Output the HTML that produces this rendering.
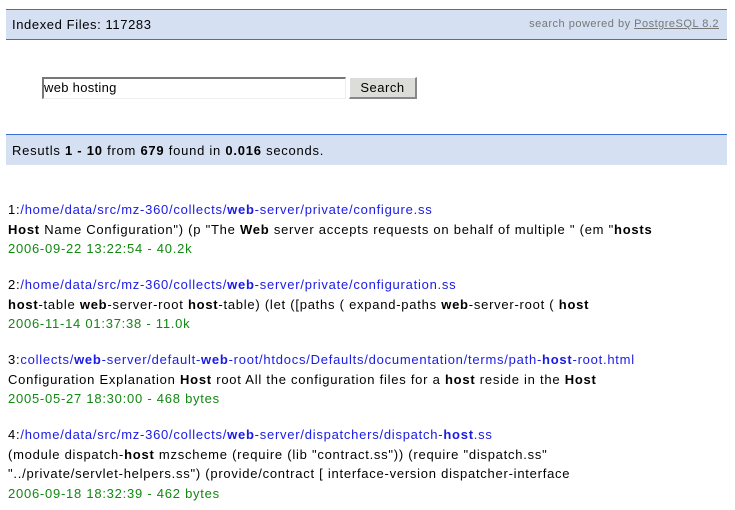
<!DOCTYPE html>
<html><head><meta charset="utf-8"><style>
*{margin:0;padding:0;box-sizing:border-box}
body{width:735px;height:510px;background:#fff;font-family:"Liberation Sans",sans-serif;font-size:13px;color:#000;position:relative;overflow:hidden;letter-spacing:0.75px}
.bar{position:absolute;left:6px;width:721px;background:#d5e0f2;border-top:1px solid #3a6fd8}
#top{top:9px;height:31px;border-bottom:1px solid #3a6fd8}
#top .l{position:absolute;left:6px;top:7px;font-size:13px;letter-spacing:0.6px}
#top .r{position:absolute;right:8px;top:8px;font-size:11px;color:#777;letter-spacing:0.5px}
#top .r u{color:#777}
#res{top:134px;height:31px}
#res span{position:absolute;left:6px;top:8px}
#inp{position:absolute;left:42px;top:77px;width:304px;height:22px;border:1px solid #888;border-right-color:#eee;border-bottom-color:#eee;border-top:2px solid #777;border-left:2px solid #777;padding-left:0;font-size:13px;line-height:18px;letter-spacing:0.3px}
#btn{position:absolute;left:349px;top:77px;width:68px;height:22px;background:#dcdcd8;border:1px solid #fff;border-right:2px solid #888;border-bottom:2px solid #888;text-align:center;line-height:19px;font-size:13px;letter-spacing:0.5px}
.blk{position:absolute;left:8px;line-height:19.5px;white-space:nowrap}
.blk a{color:#1a1ae6;text-decoration:none}
.g{color:#118811}
</style></head><body>
<div class="bar" id="top"><span class="l">Indexed Files: 117283</span><span class="r">search powered by <u>PostgreSQL 8.2</u></span></div>
<div id="inp">web hosting</div>
<div id="btn">Search</div>
<div class="bar" id="res"><span>Resutls <b>1 - 10</b> from <b>679</b> found in <b>0.016</b> seconds.</span></div>
<div class="blk" style="top:200px">1:<a>/home/data/src/mz-360/collects/<b>web</b>-server/private/configure.ss</a><br><b>Host</b> Name Configuration") (p "The <b>Web</b> server accepts requests on behalf of multiple " (em "<b>hosts</b><br><span class="g">2006-09-22 13:22:54 - 40.2k</span></div>
<div class="blk" style="top:275px">2:<a>/home/data/src/mz-360/collects/<b>web</b>-server/private/configuration.ss</a><br><b>host</b>-table <b>web</b>-server-root <b>host</b>-table) (let ([paths ( expand-paths <b>web</b>-server-root ( <b>host</b><br><span class="g">2006-11-14 01:37:38 - 11.0k</span></div>
<div class="blk" style="top:350px">3:<a>collects/<b>web</b>-server/default-<b>web</b>-root/htdocs/Defaults/documentation/terms/path-<b>host</b>-root.html</a><br>Configuration Explanation <b>Host</b> root All the configuration files for a <b>host</b> reside in the <b>Host</b><br><span class="g">2005-05-27 18:30:00 - 468 bytes</span></div>
<div class="blk" style="top:425px">4:<a>/home/data/src/mz-360/collects/<b>web</b>-server/dispatchers/dispatch-<b>host</b>.ss</a><br>(module dispatch-<b>host</b> mzscheme (require (lib "contract.ss")) (require "dispatch.ss"<br>"../private/servlet-helpers.ss") (provide/contract [ interface-version dispatcher-interface<br><span class="g">2006-09-18 18:32:39 - 462 bytes</span></div>
</body></html>
